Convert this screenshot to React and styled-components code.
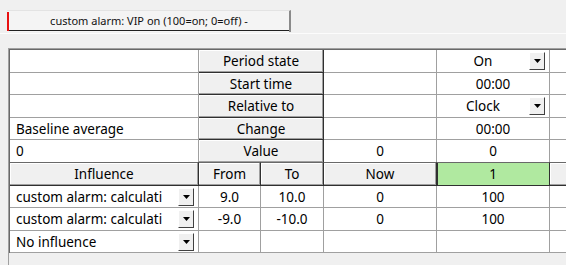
import React from "react";
import styled, { createGlobalStyle } from "styled-components";

const GlobalStyle = createGlobalStyle`
    body {
        margin: 0;
        background: #f0f0f0;
        font-family: "Noto Sans", "DejaVu Sans", sans-serif;
        color: #000;
    }
`

const Page = styled.div`
    width: 566px;
    height: 265px;
    overflow: hidden;
    display: flex;
    flex-direction: column;
`

const TabStrip = styled.div`
    height: 23px;
    padding: 10px 0 0 7px;
    border-bottom: 1px solid #fcfcfc;
    display: flex;
`

const Tab = styled.div`
    width: 282px;
    height: 21px;
    display: flex;
    background: #f4f4f4;
    border-top: 1px solid #e3e3e3;
    border-right: 2px solid #8a8a8a;
    margin-bottom: -2px;
`

const RedMark = styled.div`
    width: 2px;
    height: 19px;
    margin-top: 1px;
    background: #e81010;
`

const TabLabel = styled.div`
    flex: 1;
    height: 19px;
    border-bottom: 1px solid #202020;
    display: flex;
    align-items: center;
    justify-content: center;
    font-size: 11px;
    color: #111;
`

const Frame = styled.div`
    flex: 1;
    margin: 14px 0 0 8px;
    border-top: 1px solid #a0a0a0;
    border-left: 1px solid #a0a0a0;
    background: #f0f0f0;
`

const Grid = styled.div`
    display: grid;
    grid-template-columns: 189px 62px 63px 113px 113px 113px;
    grid-template-rows: 23px 22px 23px 22px 23px 23px 22px 23px 22px;
    border-top: 1px solid #696969;
    border-left: 1px solid #696969;
    width: max-content;
    font-size: 13.5px;
`

const Cell = styled.div`
    box-sizing: border-box;
    background: #fff;
    border-right: 1px solid #a0a0a0;
    border-bottom: 1px solid #a0a0a0;
    display: flex;
    align-items: center;
    justify-content: ${p => (p.$left ? "flex-start" : "center")};
    padding: ${p => (p.$left ? "0 0 0 6px" : "0")};
    white-space: nowrap;
    overflow: hidden;
    grid-column: ${p => (p.$span ? `span ${p.$span}` : "auto")};
`

const ButtonCell = styled(Cell)`
    background: ${p => (p.$green ? "#b0e9a0" : "#f0f0f0")};
    border-right: 1px solid #303030;
    border-bottom: 1px solid #303030;
    box-shadow: ${p => (p.$green
        ? "inset 1px 0 0 #303030"
        : "inset -1px -1px 0 #a0a0a0, inset 1px 1px 0 #fff")};
`

const HeaderCell = styled(ButtonCell)`
    border-top: 1px solid #696969;
    margin-top: -1px;
`

const ComboCell = styled(Cell)`
    justify-content: space-between;
    padding: 0 4px 0 ${p => (p.$left ? "6px" : "0")};
`

const ComboText = styled.span`
    flex: 1;
    text-align: ${p => (p.$left ? "left" : "center")};
    overflow: hidden;
`

const DropButton = styled.div`
    width: 16px;
    height: 18px;
    flex: none;
    box-sizing: border-box;
    background: #f0f0f0;
    border-top: 1px solid #fff;
    border-left: 1px solid #fff;
    border-right: 1px solid #404040;
    border-bottom: 1px solid #404040;
    display: flex;
    align-items: center;
    justify-content: center;
`

function Combo({ text, left })
{
    return (
        <ComboCell $left = {left}>
            <ComboText $left = {left}>{text}</ComboText>
            <DropButton>
                <svg width = "7" height = "4" viewBox = "0 0 7 4">
                    <path d = "M0 0 H7 L3.5 4 Z" fill = "#000"/>
                </svg>
            </DropButton>
        </ComboCell>
    )
}

const topRows = [
    { name: "", label: "Period state", now: "", value: "On", combo: true },
    { name: "", label: "Start time", now: "", value: "00:00" },
    { name: "", label: "Relative to", now: "", value: "Clock", combo: true },
    { name: "Baseline average", label: "Change", now: "", value: "00:00" },
    { name: "0", label: "Value", now: "0", value: "0" },
]

const influences = [
    { name: "custom alarm: calculati", from: "9.0", to: "10.0", now: "0", value: "100" },
    { name: "custom alarm: calculati", from: "-9.0", to: "-10.0", now: "0", value: "100" },
    { name: "No influence", from: "", to: "", now: "", value: "" },
]

export default function App()
{
    return (
        <Page>
            <GlobalStyle/>
            <TabStrip>
                <Tab>
                    <RedMark/>
                    <TabLabel>custom alarm: VIP on (100=on; 0=off) -</TabLabel>
                </Tab>
            </TabStrip>

            <Frame>
                <Grid>
                    {topRows.map((row) =>
                    (
                        <React.Fragment key = {row.label}>
                            <Cell $left>{row.name}</Cell>
                            <ButtonCell $span = {2}>{row.label}</ButtonCell>
                            <Cell>{row.now}</Cell>
                            {row.combo ? <Combo text = {row.value}/> : <Cell>{row.value}</Cell>}
                            <Cell/>
                        </React.Fragment>
                    ))}

                    {/* header of the influence table */}
                    <HeaderCell>Influence</HeaderCell>
                    <HeaderCell>From</HeaderCell>
                    <HeaderCell>To</HeaderCell>
                    <HeaderCell>Now</HeaderCell>
                    <HeaderCell $green>1</HeaderCell>
                    <HeaderCell/>

                    {influences.map((row, index) =>
                    (
                        <React.Fragment key = {index}>
                            <Combo left text = {row.name}/>
                            <Cell>{row.from}</Cell>
                            <Cell>{row.to}</Cell>
                            <Cell>{row.now}</Cell>
                            <Cell>{row.value}</Cell>
                            <Cell/>
                        </React.Fragment>
                    ))}
                </Grid>
            </Frame>
        </Page>
    )
}
